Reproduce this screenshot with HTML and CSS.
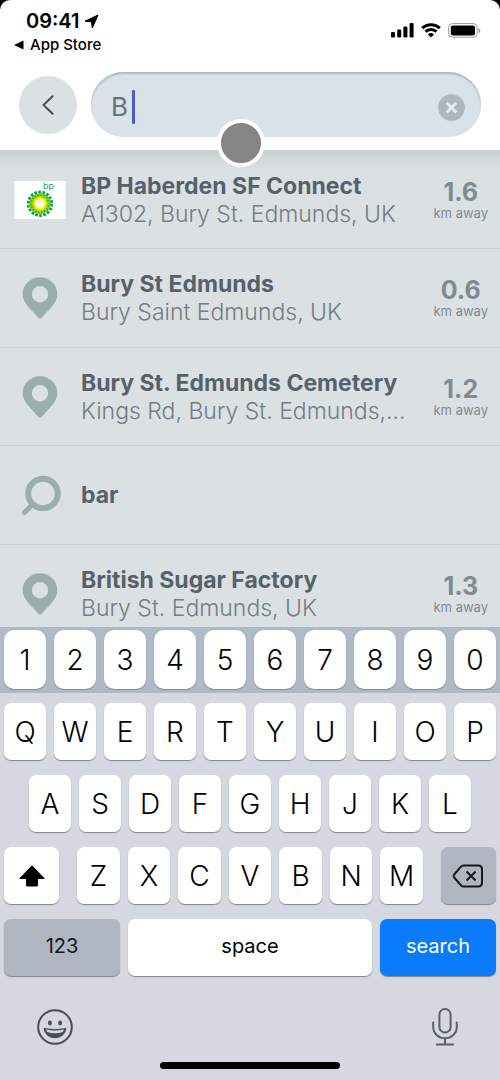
FILE: index.html
```
<!DOCTYPE html>
<html lang="en">
<head>
<meta charset="utf-8">
<meta name="viewport" content="width=device-width, initial-scale=1">
<title>Search</title>
<link rel="stylesheet" href="styles.css">
</head>
<body>
<div class="screen">
  <header class="top">
    <div class="status">
      <div class="status-left">
        <div class="clock">09:41
          <svg class="arrow" viewBox="0 0 15 15" aria-hidden="true"><path d="M14 1 1 7.200l6.500.6.800 6.200z"/></svg>
        </div>
        <a class="back-app" href="#"><svg class="tri" viewBox="0 0 10 10" aria-hidden="true"><path d="M0 5 9.500.4v9.200z"/></svg>App Store</a>
      </div>
      <div class="status-right">
        <svg class="signal" viewBox="0 0 23 15" aria-hidden="true"><rect x="0" y="9" width="4" height="5.500" rx="1.200"/><rect x="6.200" y="6.500" width="4" height="8" rx="1.200"/><rect x="12.400" y="3.500" width="4" height="11" rx="1.200"/><rect x="18.600" y="0" width="4" height="14.500" rx="1.200"/></svg>
        <svg class="wifi" viewBox="0 0 20 15" aria-hidden="true"><path d="M10 14.500 6.900 11.400a4.500 4.500 0 0 1 6.200 0z"/><path class="arc" d="M4.500 8.600a8 8 0 0 1 11 0M1.200 5.200a12.700 12.700 0 0 1 17.600 0"/></svg>
        <svg class="battery" viewBox="0 0 33 15" aria-hidden="true"><rect class="shell" x=".6" y=".6" width="28.600" height="13.600" rx="4"/><rect x="2.800" y="2.600" width="24.200" height="9.800" rx="2"/><path class="nub" d="M30.500 5v5q1.800-.8 1.800-2.500T30.500 5z"/></svg>
      </div>
    </div>
    <div class="search-bar">
      <button class="back" type="button" aria-label="Back"><svg viewBox="0 0 12 20"><path d="M10.600 1.200 1.500 10l9.100 8.800"/></svg></button>
      <form class="field">
        <input class="query" type="text" value="B" aria-label="Search">
        <span class="caret"></span>
        <button class="clear" type="button" aria-label="Clear"><svg viewBox="0 0 27 27"><circle cx="13.500" cy="13.500" r="13.300"/><path d="m8.700 8.900 9.600 9.600m0-9.600-9.600 9.600"/></svg></button>
      </form>
    </div>
    <span class="touch"></span>
  </header>

  <svg class="defs" aria-hidden="true">
    <symbol id="pin" viewBox="0 0 36 42"><path fill-rule="evenodd" d="M18 .3C8.300.300.700 7.900.700 17c0 5 2.200 8.800 5.200 12.300L16 40.500q2 2 4 0l10.100-11.200c3-3.500 5.200-7.300 5.200-12.300C35.300 7.900 27.700.3 18 .3zM18 9a8.200 8.200 0 1 1 0 16.400A8.200 8.200 0 0 1 18 9z"/></symbol>
  </svg>

  <main class="results">
    <div class="row">
      <svg class="brand" viewBox="0 0 51 38" role="img" aria-label="bp">
        <rect width="51" height="38" fill="#fff"/>
        <circle cx="25.500" cy="22.800" r="11.200" fill="none" stroke="#0aa548" stroke-width="4" stroke-dasharray="2.600 1.310"/>
        <circle cx="25.500" cy="22.800" r="10.300" fill="#1cab3f"/>
        <circle cx="25.500" cy="22.800" r="9" fill="none" stroke="#8fd11b" stroke-width="3" stroke-dasharray="2 1.140"/>
        <circle cx="25.500" cy="22.800" r="7.800" fill="#b5dc16"/>
        <circle cx="25.500" cy="22.800" r="6.300" fill="#fff200"/>
        <circle cx="25.500" cy="22.800" r="4.800" fill="#fff9a0"/>
        <circle cx="25.500" cy="22.800" r="3.300" fill="#fff"/>
        <text x="28.500" y="8" class="brand-text">bp</text>
      </svg>
      <div class="info"><div class="name">BP Haberden SF Connect</div><div class="address">A1302, Bury St. Edmunds, UK</div></div>
      <div class="distance"><div class="km">1.6</div><div class="unit">km away</div></div>
    </div>
    <div class="row">
      <svg class="pin"><use href="#pin"/></svg>
      <div class="info"><div class="name">Bury St Edmunds</div><div class="address">Bury Saint Edmunds, UK</div></div>
      <div class="distance"><div class="km">0.6</div><div class="unit">km away</div></div>
    </div>
    <div class="row">
      <svg class="pin"><use href="#pin"/></svg>
      <div class="info"><div class="name">Bury St. Edmunds Cemetery</div><div class="address">Kings Rd, Bury St. Edmunds,...</div></div>
      <div class="distance"><div class="km">1.2</div><div class="unit">km away</div></div>
    </div>
    <div class="row">
      <svg class="lens" viewBox="0 0 40 41"><circle cx="22" cy="18.500" r="14.800"/><path d="M11 30 3.500 37.500"/></svg>
      <div class="info"><div class="name">bar</div></div>
    </div>
    <div class="row">
      <svg class="pin"><use href="#pin"/></svg>
      <div class="info"><div class="name">British Sugar Factory</div><div class="address">Bury St. Edmunds, UK</div></div>
      <div class="distance"><div class="km">1.3</div><div class="unit">km away</div></div>
    </div>
  </main>

  <section class="keyboard" aria-label="Keyboard">
    <div class="keys digits">
      <button class="key">1</button><button class="key">2</button><button class="key">3</button><button class="key">4</button><button class="key">5</button><button class="key">6</button><button class="key">7</button><button class="key">8</button><button class="key">9</button><button class="key">0</button>
    </div>
    <div class="letters">
      <div class="keys">
        <button class="key">Q</button><button class="key">W</button><button class="key">E</button><button class="key">R</button><button class="key">T</button><button class="key">Y</button><button class="key">U</button><button class="key">I</button><button class="key">O</button><button class="key">P</button>
      </div>
      <div class="keys home">
        <button class="key">A</button><button class="key">S</button><button class="key">D</button><button class="key">F</button><button class="key">G</button><button class="key">H</button><button class="key">J</button><button class="key">K</button><button class="key">L</button>
      </div>
      <div class="keys lower">
        <button class="key" aria-label="Shift"><svg class="shift" viewBox="0 0 26 22"><path d="M13 .2 25.300 13c.5.6.3 1-.4 1H19v6q0 1.600-1.600 1.600H8.600Q7 21.600 7 20v-6H1.100c-.7 0-.9-.4-.4-1z"/></svg></button>
        <div class="keys middle">
          <button class="key">Z</button><button class="key">X</button><button class="key">C</button><button class="key">V</button><button class="key">B</button><button class="key">N</button><button class="key">M</button>
        </div>
        <button class="key gray" aria-label="Delete"><svg class="delete" viewBox="0 0 32 24"><path d="M11.500 1.500h14.500q4 0 4 4v13q0 4-4 4H11.500q-1.500 0-2.500-1.200L2.200 13.500q-1.200-1.500 0-3L9 2.700q1-1.200 2.500-1.200zM14.600 7.500l9 9m0-9-9 9"/></svg></button>
      </div>
      <div class="keys bottom">
        <button class="key gray word">123</button>
        <button class="key word">space</button>
        <button class="key blue word">search</button>
      </div>
    </div>
    <div class="tools">
      <button class="tool" aria-label="Emoji"><svg class="emoji" viewBox="0 0 36 36"><circle class="face" cx="18" cy="18" r="16.800"/><ellipse cx="12.900" cy="14" rx="2" ry="2.400"/><ellipse cx="23.100" cy="14" rx="2" ry="2.400"/><path fill-rule="evenodd" d="M6.700 19.800q-.2-1.200 1-.9 10.300 2.200 20.600 0 1.200-.3 1 .9c-1 6-5.500 9.400-11.300 9.400S7.700 25.800 6.700 19.800zm2.400.8 1 2.500q7.900 2.400 15.800 0l1-2.500q-8.900 1.800-17.800 0z"/></svg></button>
      <button class="tool" aria-label="Dictate"><svg class="mic" viewBox="0 0 26 38"><rect x="7.400" y="1" width="11.200" height="23.500" rx="5.600"/><path d="M1.200 14.500v4.500a11.800 11.200 0 0 0 23.600 0v-4.500M13 30.200v6.200M4.800 36.600h16.400"/></svg></button>
    </div>
    <div class="home-bar"></div>
  </section>
</div>
</body>
</html>
```
FILE: styles.css
```
* { box-sizing: border-box; }
body {
  margin: 0;
  background: #000;
  font-family: Inter, "Liberation Sans", sans-serif;
}
button, input { font: inherit; color: inherit; border: 0; padding: 0; margin: 0; }
svg { display: block; flex: none; }
.defs { display: none; }
.screen {
  display: flex;
  flex-direction: column;
  height: 100vh;
  overflow: hidden;
  background: #fefeff;
  border-radius: 10px 10px 0 0;
}

.top { position: relative; flex: none; padding-bottom: 13px; z-index: 1; }
.status {
  display: flex;
  justify-content: space-between;
  height: 72px;
  padding: 10px 19px 0 14px;
}
.clock {
  display: flex;
  align-items: center;
  gap: 4px;
  padding-left: 12px;
  font-size: 20px;
  line-height: 23px;
  font-weight: 600;
}
.arrow { width: 15px; height: 15px; stroke: #000; stroke-width: 1; stroke-linejoin: round; }
.back-app {
  display: flex;
  align-items: center;
  gap: 6px;
  font-size: 15px;
  line-height: 24px;
  font-weight: 500;
  color: #000;
  text-decoration: none;
}
.tri { width: 10px; height: 10px; }
.status-right { display: flex; gap: 7px; padding-top: 13px; }
.signal { width: 23px; height: 15px; }
.wifi { width: 20px; height: 15px; }
.battery { width: 33px; height: 15px; }
.wifi .arc { fill: none; stroke: #000; stroke-width: 3; }
.battery .shell { fill: none; stroke: #999; stroke-width: 1; }
.battery .nub { fill: #999; }

.search-bar { display: flex; align-items: center; gap: 14px; padding: 0 19px; }
.back {
  display: flex;
  flex: none;
  align-items: center;
  justify-content: center;
  width: 58px;
  height: 58px;
  border-radius: 50%;
  background: #dbe0e3;
}
.back svg { width: 12px; height: 20px; fill: none; stroke: #46505a; stroke-width: 2; stroke-linecap: round; stroke-linejoin: round; }
.field {
  position: relative;
  display: flex;
  flex: 1;
  min-width: 0;
  align-items: center;
  height: 65px;
  margin: 0;
  padding: 5px 16px 0 20px;
  border-radius: 33px;
  background: #dae2e9;
  box-shadow: inset 0 2px 2px #a5bcc3;
}
.query {
  flex: 1;
  min-width: 0;
  background: none;
  outline: 0;
  font-size: 26px;
  line-height: 32px;
  color: #66727a;
}
.caret { position: absolute; left: 41px; top: 18px; width: 3px; height: 34px; border-radius: 1px; background: #4b5cc9; }
.clear { flex: none; width: 27px; height: 27px; background: none; }
.clear svg { width: 27px; height: 27px; fill: #afb6bd; }
.clear path { stroke: #e4ebef; stroke-width: 3; }
.touch {
  position: absolute;
  left: 217px;
  top: 119px;
  width: 48px;
  height: 48px;
  border: 4px solid #fff;
  border-radius: 50%;
  background: #858586;
}

.results {
  flex: 1;
  min-height: 0;
  overflow: hidden;
  padding-top: 1px;
  background: linear-gradient(#c6cecd, #d3d9da 8px, #dbe0e3 22px);
}
.row {
  display: flex;
  align-items: center;
  height: 98px;
  padding: 0 12px 0 14px;
  border-bottom: 1px solid #c6d2d3;
}
.row:nth-child(even) { height: 99px; }
.brand { width: 52px; height: 38px; margin-right: 15px; }
.brand-text { font: 9px Inter, sans-serif; fill: #2aa65c; }
.pin { width: 36px; height: 42px; margin: 0 23px 0 8px; fill: #9aaeae; }
.lens { width: 40px; height: 41px; margin: 0 20px 0 7px; fill: none; stroke: #9aaeae; stroke-width: 6; }
.lens path { stroke-width: 5; stroke-linecap: round; }
.info { flex: 1; min-width: 0; }
.name, .address { white-space: nowrap; line-height: 28px; }
.name { font-size: 23px; font-weight: 700; color: #56616b; }
.address { font-size: 23px; font-weight: 300; color: #737d83; }
.distance { flex: none; margin-left: 20px; text-align: center; color: #7f8b90; }
.km { font-size: 25px; line-height: 26px; font-weight: 700; }
.unit { font-size: 13px; line-height: 16px; }

.keyboard { flex: none; background: #d5d8e0; }
.keys { display: flex; gap: 8px; }
.digits { padding: 3px 4px 4px; background: #b0bac7; }
.key {
  display: flex;
  flex: 1 1 0;
  align-items: center;
  justify-content: center;
  min-width: 0;
  height: 57px;
  border-radius: 7px;
  background: #fefeff;
  box-shadow: 0 1px 1px #85888e;
  color: #000;
  font-size: 28px;
  font-weight: 300;
}
.digits .key { height: 59px; border-radius: 10px; }
.letters { display: flex; flex-direction: column; gap: 15px; padding: 10px 4px 0; }
.home { padding: 0 25px; }
.lower { display: grid; grid-template-columns: 4fr 25fr 4fr; gap: 18px; }
.bottom { display: grid; grid-template-columns: 29fr 61fr 29fr; }
.key.word { font-size: 20px; font-weight: 400; padding-bottom: 3px; }
.gray { background: #b0b6c1; color: #15181d; }
.blue { background: #0a7cfb; color: #fff; }
.shift { width: 26px; height: 22px; }
.delete { width: 32px; height: 24px; fill: none; stroke: #15181d; stroke-width: 2; }
.tools { display: flex; justify-content: space-between; align-items: center; height: 86px; padding: 16px 42px 0 37px; }
.tool { background: none; }
.emoji { width: 36px; height: 36px; fill: #494d55; }
.emoji .face { fill: none; stroke: #494d55; stroke-width: 2; }
.mic { width: 26px; height: 38px; fill: none; stroke: #5b5f68; stroke-width: 2; stroke-linecap: round; }
.home-bar { width: 36%; height: 7px; margin: 0 auto 11px; border-radius: 4px; background: #000; }
```
